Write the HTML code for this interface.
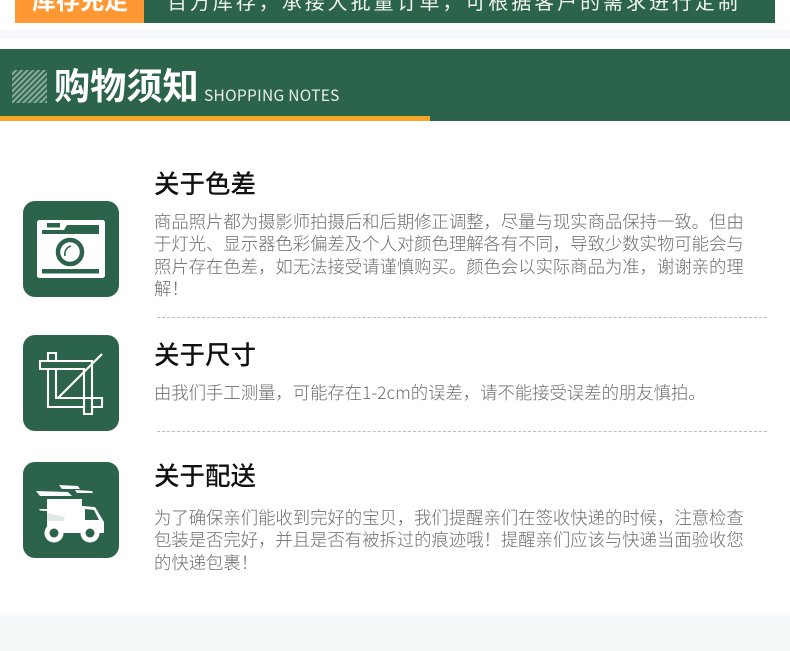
<!DOCTYPE html>
<html lang="zh"><head><meta charset="utf-8"><style>
html,body{margin:0;padding:0;background:#fff}
#p{position:relative;width:790px;height:651px;overflow:hidden;background:#fff;font-family:"Liberation Sans","Noto Sans CJK SC",sans-serif}
#p div{position:absolute}
.t{white-space:nowrap;font-family:"Noto Sans CJK SC","Liberation Sans",sans-serif}
.h{left:154px;font-size:25.5px;line-height:34px;color:#111;font-weight:500}
.b{left:154px;font-size:17.35px;line-height:22.4px;color:#6c6c6c;font-weight:300}
.d{left:157px;width:610px;height:0;border-top:1px dashed #bdbdbd}
.ic{left:23px;width:96px;height:96px;border-radius:12px;background:#2c634b}
svg{position:absolute;left:0;top:0}
</style></head><body><div id="p">
<div style="left:15px;top:0;width:129px;height:23px;background:#ff9833"></div>
<div style="left:144px;top:0;width:631px;height:23px;background:#2c634b"></div>
<div class="t" style="left:32px;top:-17px;font-size:24px;line-height:32px;font-weight:700;color:#fff">库存充足</div>
<div class="t" style="left:167px;top:-15px;font-size:20px;line-height:32px;letter-spacing:2.95px;color:#f0f4f2">百万库存，承接大批量订单，可根据客户的需求进行定制</div>
<div style="left:0;top:30px;width:790px;height:9px;background:#f5f9fa"></div>
<div style="left:0;top:49px;width:790px;height:72px;background:#2c634b"></div>
<div style="left:0;top:116px;width:430px;height:5px;background:#f7a829"></div>
<svg width="790" height="121" style="left:0;top:0"><defs><pattern id="s" width="4" height="4" patternUnits="userSpaceOnUse" patternTransform="rotate(45)"><rect width="4" height="4" fill="#2c634b"/><rect width="2.2" height="4" fill="#86ab9a"/></pattern></defs><rect x="12" y="70" width="35" height="33" fill="url(#s)"/></svg>
<div class="t" style="left:54px;top:59px;font-size:36.2px;line-height:50px;font-weight:700;color:#fff">购物须知</div>
<div class="t" style="left:204px;top:85px;font-size:15.5px;line-height:20px;letter-spacing:.3px;color:#e8efec">SHOPPING NOTES</div>

<div class="ic" style="top:201px"><svg width="96" height="96" viewBox="0 0 96 96">
<rect x="14" y="19" width="68" height="58" rx="2.5" fill="#fff"/>
<path d="M19 33V29H41L44 24H76V33Z" fill="#2c634b"/><rect x="24" y="22" width="13" height="4.5" fill="#2c634b"/>
<rect x="19" y="68" width="57" height="4.5" fill="#2c634b"/>
<circle cx="47" cy="51" r="12" fill="none" stroke="#2c634b" stroke-width="4.5"/>
<path d="M42 55C41 50 44 46 48 45" fill="none" stroke="#2c634b" stroke-width="1.6"/>
</svg></div>
<div class="t h" style="top:166px">关于色差</div>
<div class="t b" style="top:210px">商品照片都为摄影师拍摄后和后期修正调整，尽量与现实商品保持一致。但由<br>于灯光、显示器色彩偏差及个人对颜色理解各有不同，导致少数实物可能会与<br>照片存在色差，如无法接受请谨慎购买。颜色会以实际商品为准，谢谢亲的理<br>解！</div>
<div class="d" style="top:317px"></div>

<div class="ic" style="top:335px"><svg width="96" height="96" viewBox="0 0 96 96" fill="none" stroke="#fff" stroke-width="2.1">
<path d="M25 26V18H33V26"/>
<path d="M17 26H69V79H61V34H17Z"/>
<path d="M25 34V72H61M69 72H79V63H33V34"/>
<path d="M35 63L79 19"/>
</svg></div>
<div class="t h" style="top:337px">关于尺寸</div>
<div class="t b" style="top:381px">由我们手工测量，可能存在1-2cm的误差，请不能接受误差的朋友慎拍。</div>
<div class="d" style="top:431px"></div>

<div class="ic" style="top:462px"><svg width="96" height="96" viewBox="0 0 96 96" fill="#fff">
<path d="M13 29L45 30L49 34H17ZM36 23L55 24L57 27H39ZM52 28L69 29L70 31H54Z"/>
<path d="M24 37H59V44L72 45L81 60V71H24V49L17 48.5L16 47L24 47Z"/>
<path d="M24 51L42 55L40 59H24Z" fill="#2c634b" opacity=".15"/>
<path d="M62 47L71 48L76 58H62Z" fill="#2c634b"/>
<circle cx="31" cy="71" r="9.5" fill="#fff"/><circle cx="31" cy="71" r="4.5" fill="#2c634b"/>
<circle cx="67" cy="71" r="9.5" fill="#fff"/><circle cx="67" cy="71" r="4.5" fill="#2c634b"/>
</svg></div>
<div class="t h" style="top:458px">关于配送</div>
<div class="t b" style="top:506px">为了确保亲们能收到完好的宝贝，我们提醒亲们在签收快递的时候，注意检查<br>包装是否完好，并且是否有被拆过的痕迹哦！提醒亲们应该与快递当面验收您<br>的快递包裹！</div>

<div style="left:0;top:615px;width:790px;height:36px;background:#f5f9fa"></div>
</div></body></html>
